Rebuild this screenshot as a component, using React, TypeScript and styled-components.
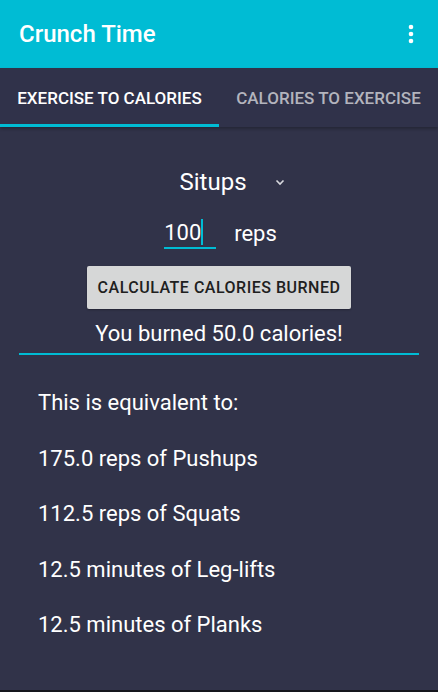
import React from "react";
import styled, { createGlobalStyle } from "styled-components";

const Global = createGlobalStyle`
  html, body { margin: 0; padding: 0; background: #1b1c26; }
  body { font-family: Roboto, "Noto Sans", sans-serif; }
  * { box-sizing: border-box; }
`;

const Screen = styled.div`
  width: 438px;
  height: 690px;
  display: flex;
  flex-direction: column;
  background: #313349;
  overflow: hidden;
`;

const Toolbar = styled.div`
  height: 68px;
  background: #00bcd4;
  display: flex;
  align-items: center;
  justify-content: space-between;
  padding: 0 24px 0 19px;
`;

const Title = styled.div`
  color: #fff;
  font-size: 24px;
  font-weight: 500;
`;

const Tabs = styled.div`
  height: 59px;
  display: flex;
  background: #30324a;
  box-shadow: 0 2px 3px rgba(0, 0, 0, 0.25);
  position: relative;
  z-index: 1;
`;

const Tab = styled.div<{ $active?: boolean }>`
  width: 219px;
  display: flex;
  align-items: center;
  justify-content: center;
  font-size: 17px;
  font-weight: 500;
  white-space: nowrap;
  color: ${(p) => (p.$active ? "#ffffff" : "#b3b4bd")};
  border-bottom: 3px solid ${(p) => (p.$active ? "#00bcd4" : "transparent")};
  padding-top: 3px;
`;

const Content = styled.div`
  flex: 1;
  display: flex;
  flex-direction: column;
  align-items: center;
  padding-top: 38px;
`;

const SpinnerRow = styled.div`
  display: flex;
  align-items: center;
  height: 34px;
  color: #fff;
  font-size: 24px;
  margin-left: 26px;
  gap: 28px;
`;

const InputRow = styled.div`
  display: flex;
  align-items: flex-end;
  margin-top: 18px;
  margin-left: 3px;
  gap: 18px;
  font-size: 22px;
  color: #fff;
`;

const Field = styled.div`
  width: 52px;
  height: 32px;
  border-bottom: 2px solid #00bcd4;
  display: flex;
  align-items: center;
  padding-left: 0;
`;

const Cursor = styled.span`
  display: inline-block;
  width: 2px;
  height: 26px;
  background: #00bcd4;
`;

const Unit = styled.div`
  height: 32px;
  display: flex;
  align-items: center;
`;

const Button = styled.button`
  margin-top: 17px;
  width: 264px;
  height: 43px;
  background: #d6d7d7;
  border: none;
  border-radius: 2px;
  box-shadow: 0 1px 2px rgba(0, 0, 0, 0.3);
  font-family: Roboto, sans-serif;
  font-size: 16px;
  font-weight: 500;
  color: #202020;
  letter-spacing: 0.5px;
  white-space: nowrap;
  padding: 0;
`;

const Result = styled.div`
  margin-top: 12px;
  width: 400px;
  text-align: center;
  color: #fff;
  font-size: 22px;
  line-height: 26px;
  padding-bottom: 6px;
  border-bottom: 2px solid #00bcd4;
`;

const List = styled.div`
  align-self: stretch;
  display: flex;
  flex-direction: column;
  padding: 35px 38px 0;
  gap: 29.5px;
`;

const Line = styled.div`
  color: #fff;
  font-size: 22px;
  height: 26px;
  line-height: 26px;
`;

const BottomEdge = styled.div`
  height: 2px;
  background: #15161d;
`;

function MoreIcon() {
  return (
    <svg width="6" height="20" viewBox="0 0 6 20">
      <circle cx="3" cy="3" r="2.3" fill="#fff" />
      <circle cx="3" cy="10" r="2.3" fill="#fff" />
      <circle cx="3" cy="17" r="2.3" fill="#fff" />
    </svg>
  );
}

function Chevron() {
  return (
    <svg width="10" height="7" viewBox="0 0 10 7">
      <path d="M1.5 1.5 L5 5 L8.5 1.5" stroke="#d8d9de" strokeWidth="1.6" fill="none" />
    </svg>
  );
}

export default function App() {
  const items = [
    "175.0 reps of Pushups",
    "112.5 reps of Squats",
    "12.5 minutes of Leg-lifts",
    "12.5 minutes of Planks",
  ];
  return (
    <>
      <Global />
      <Screen>
        <Toolbar>
          <Title>Crunch Time</Title>
          <MoreIcon />
        </Toolbar>
        <Tabs>
          <Tab $active>EXERCISE TO CALORIES</Tab>
          <Tab>CALORIES TO EXERCISE</Tab>
        </Tabs>
        <Content>
          <SpinnerRow>
            <span>Situps</span>
            <Chevron />
          </SpinnerRow>
          <InputRow>
            <Field>
              100
              <Cursor />
            </Field>
            <Unit>reps</Unit>
          </InputRow>
          <Button>CALCULATE CALORIES BURNED</Button>
          <Result>You burned 50.0 calories!</Result>
          <List>
            <Line>This is equivalent to:</Line>
            {items.map((t) => (
              <Line key={t}>{t}</Line>
            ))}
          </List>
        </Content>
      </Screen>
      <BottomEdge />
    </>
  );
}
